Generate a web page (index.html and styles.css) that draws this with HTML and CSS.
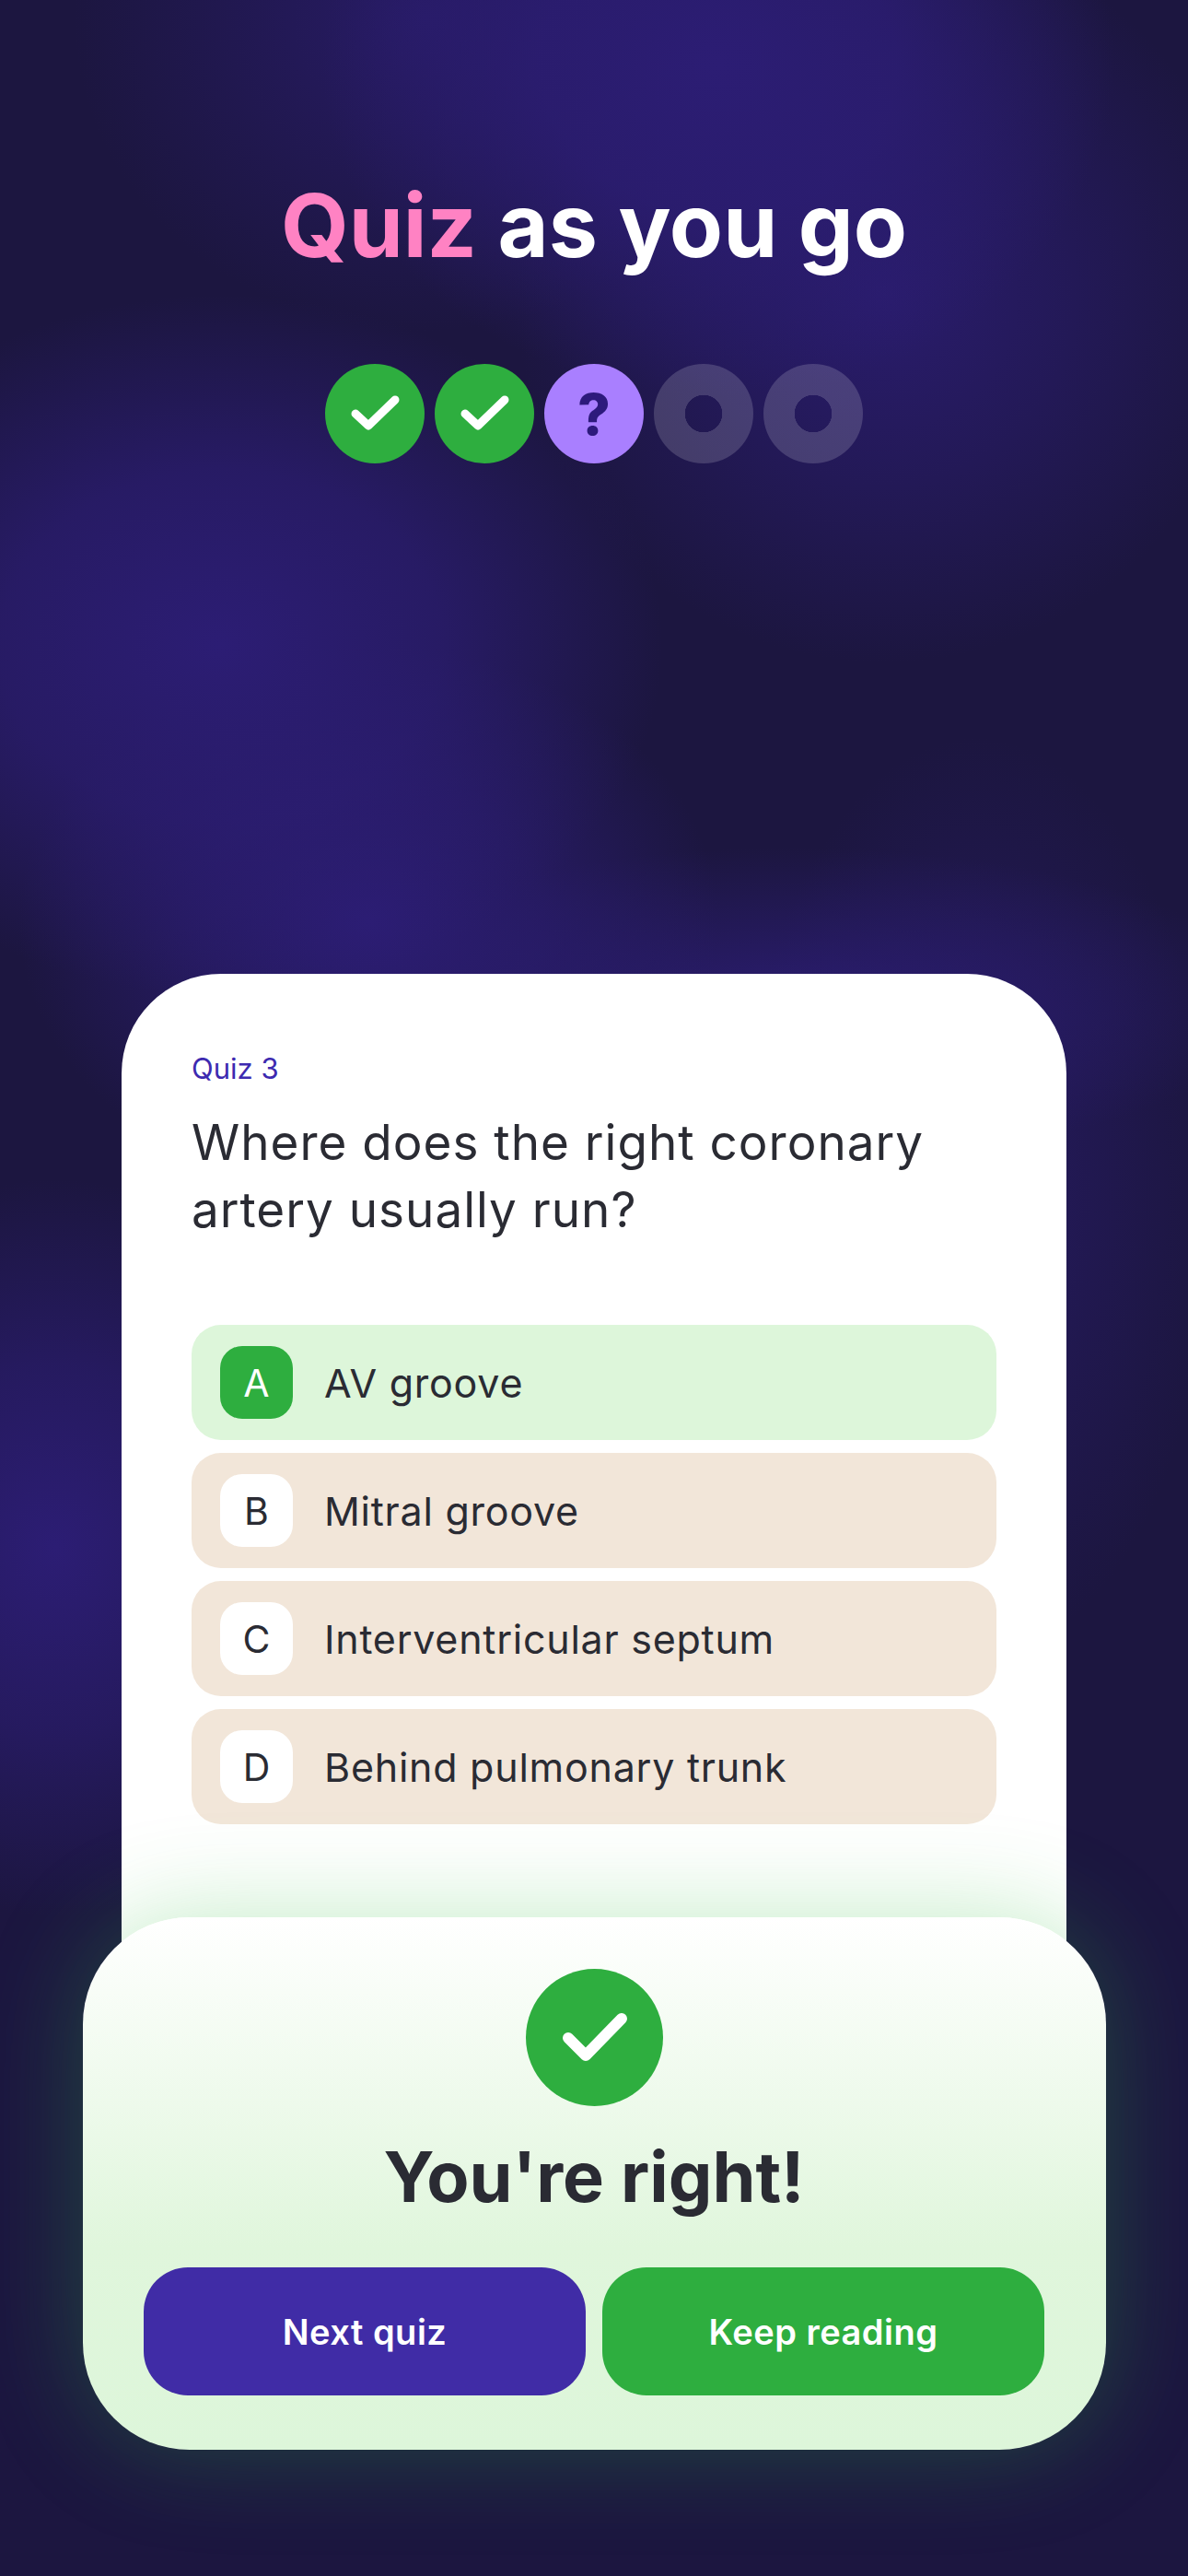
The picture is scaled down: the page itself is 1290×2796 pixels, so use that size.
FILE: index.html
```html
<!DOCTYPE html>
<html lang="en">
<head>
<meta charset="utf-8">
<title>Quiz as you go</title>
<link rel="stylesheet" href="styles.css">
</head>
<body>
<main class="screen">
  <h1 class="title"><span class="title-accent">Quiz</span> as you go</h1>
  <div class="steps">
    <div class="step step-done"><svg viewBox="0 0 108 108"><polyline class="tick tick-small" points="33,54 47,67 76,39"/></svg></div>
    <div class="step step-done"><svg viewBox="0 0 108 108"><polyline class="tick tick-small" points="33,54 47,67 76,39"/></svg></div>
    <div class="step step-current">?</div>
    <div class="step step-todo"></div>
    <div class="step step-todo"></div>
  </div>
  <section class="card">
    <p class="card-label">Quiz 3</p>
    <h2 class="question">Where does the right coronary artery usually run?</h2>
    <ul class="options">
      <li class="option option-right"><span class="letter">A</span><span>AV groove</span></li>
      <li class="option"><span class="letter">B</span><span>Mitral groove</span></li>
      <li class="option"><span class="letter">C</span><span>Interventricular septum</span></li>
      <li class="option"><span class="letter">D</span><span>Behind pulmonary trunk</span></li>
    </ul>
  </section>
  <section class="result">
    <div class="result-icon"><svg viewBox="0 0 149 149"><polyline class="tick tick-large" points="46,75 65,94 104,54"/></svg></div>
    <h2 class="result-title">You're right!</h2>
    <div class="actions">
      <button class="action action-next">Next quiz</button>
      <button class="action action-keep">Keep reading</button>
    </div>
  </section>
</main>
</body>
</html>
```
FILE: styles.css
```css
* { box-sizing: border-box; }
html, body { margin: 0; padding: 0; }
body {
  font-family: Inter, "Noto Sans", sans-serif;
  color: #2a2b33;
}
.screen {
  width: 1290px;
  height: 2796px;
  overflow: hidden;
  display: flex;
  flex-direction: column;
  align-items: center;
  background-color: #1c1640;
  background-image:
    radial-gradient(ellipse 430px 360px at 780px 70px, rgba(44,29,116,1) 0%, rgba(44,29,116,.8) 45%, rgba(44,29,116,0) 100%),
    radial-gradient(ellipse 400px 400px at 960px 320px, rgba(44,29,116,.85) 0%, rgba(44,29,116,.45) 50%, rgba(44,29,116,0) 100%),
    radial-gradient(ellipse 380px 340px at 460px 20px, rgba(44,29,116,.7) 0%, rgba(44,29,116,0) 100%),
    radial-gradient(ellipse 480px 380px at 240px 700px, rgba(44,29,116,1) 0%, rgba(44,29,116,.7) 50%, rgba(44,29,116,0) 100%),
    radial-gradient(ellipse 380px 300px at 400px 1000px, rgba(44,29,116,1) 0%, rgba(44,29,116,.6) 50%, rgba(44,29,116,0) 100%),
    radial-gradient(ellipse 520px 170px at 860px 1090px, rgba(44,29,116,.9) 0%, rgba(44,29,116,0) 100%),
    radial-gradient(ellipse 340px 400px at 60px 1680px, rgba(44,29,116,1) 0%, rgba(44,29,116,.6) 50%, rgba(44,29,116,0) 100%),
    radial-gradient(ellipse 260px 500px at 1060px 1300px, rgba(44,29,116,.6) 0%, rgba(44,29,116,0) 100%);
}
.title {
  margin: 178px 0 0;
  font-size: 95px;
  line-height: 134px;
  font-weight: 700;
  letter-spacing: 0;
  color: #fff;
}
.title-accent { color: #ff82c3; }
.steps {
  display: flex;
  gap: 11px;
  margin-top: 83px;
}
.step {
  width: 108px;
  height: 108px;
  border-radius: 50%;
  display: flex;
  align-items: center;
  justify-content: center;
}
.step svg { width: 108px; height: 108px; display: block; }
.step-done { background: #2eae3f; }
.step-current {
  background: #a97fff;
  color: #2d1a7c;
  font-size: 62px;
  font-weight: 800;
}
.step-todo {
  background: radial-gradient(circle at center, transparent 20px, rgba(255,255,255,.16) 20.5px);
}
.tick {
  fill: none;
  stroke: #fff;
  stroke-linecap: round;
  stroke-linejoin: round;
}
.tick-small { stroke-width: 9; }
.tick-large { stroke-width: 12; }
.card {
  width: 1026px;
  height: 1240px;
  margin-top: 554px;
  padding: 82px 76px 0;
  flex: none;
  background: #fff;
  border-radius: 108px;
}
.card-label {
  margin: 0;
  font-size: 31px;
  line-height: 42px;
  color: #3d2ab0;
}
.question {
  margin: 23px 0 0;
  font-size: 53px;
  line-height: 73px;
  font-weight: 400;
  letter-spacing: 1px;
}
.options {
  list-style: none;
  margin: 88px 0 0;
  padding: 0;
  display: flex;
  flex-direction: column;
  gap: 14px;
}
.option {
  height: 125px;
  padding: 0 31px;
  display: flex;
  align-items: center;
  gap: 34px;
  border-radius: 32px;
  background: #f2e6d9;
  font-size: 43px;
  letter-spacing: .75px;
}
.option-right { background: #ddf6da; }
.letter {
  width: 79px;
  height: 79px;
  flex: none;
  display: flex;
  align-items: center;
  justify-content: center;
  border-radius: 24px;
  background: #fff;
  font-size: 41px;
  letter-spacing: 0;
}
.option-right .letter { background: #2eae3f; color: #fff; }
.result {
  position: relative;
  flex: none;
  width: 1111px;
  height: 578px;
  margin-top: -216px;
  padding-top: 56px;
  display: flex;
  flex-direction: column;
  align-items: center;
  border-radius: 116px;
  background: linear-gradient(180deg, #fff 0%, #e0f6dc 62%, #ddf6da 100%);
  box-shadow: 0 0 110px rgba(50,190,64,.3);
}
.result-icon {
  width: 149px;
  height: 149px;
  border-radius: 50%;
  background: #2eae3f;
}
.result-icon svg { width: 149px; height: 149px; display: block; }
.result-title {
  margin: 23px 0 0;
  font-size: 75.5px;
  line-height: 108px;
  font-weight: 700;
  color: #2a2b33;
}
.actions {
  display: flex;
  gap: 18px;
  margin-top: 44px;
}
.action {
  width: 480px;
  height: 139px;
  border: 0;
  border-radius: 48px;
  color: #fff;
  font: 600 38px Inter, sans-serif;
  letter-spacing: .5px;
}
.action-next { background: #402ca6; }
.action-keep { background: #2eae3f; }
```
